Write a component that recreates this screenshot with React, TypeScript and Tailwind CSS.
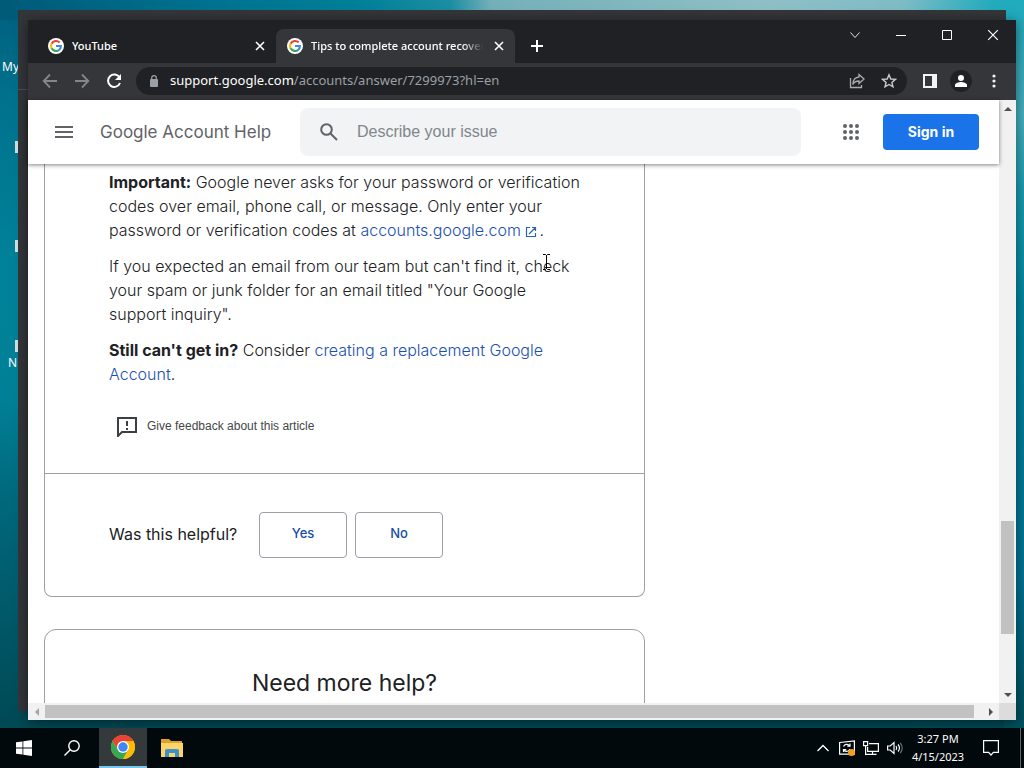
import React from "react";

function GoogleG() {
  return (
    <svg viewBox="0 0 16 16" className="size-4 shrink-0" aria-hidden="true">
      <circle cx="8" cy="8" r="8" fill="#fff" />
      <g fill="none" strokeWidth="2.1">
        <path d="M11.600 4.500A5 5 0 0 0 3.600 5.700" stroke="#ea4335" />
        <path d="M3.600 5.600a5 5 0 0 0 0 4.800" stroke="#fbbc05" />
        <path d="M3.600 10.300a5 5 0 0 0 7.700 1.400" stroke="#34a853" />
        <path d="M11.200 11.800A5 5 0 0 0 12.900 8H8" stroke="#4285f4" />
      </g>
    </svg>
  );
}

function Cross({ className }: { className: string }) {
  return (
    <svg viewBox="0 0 10 10" className={className} fill="none" stroke="currentColor" aria-hidden="true">
      <path d="M1 1l8 8M9 1L1 9" />
    </svg>
  );
}

function TabStrip() {
  return (
    <div className="flex h-[43px] shrink-0 items-stretch bg-[#202124] pl-2 text-white">
      <div role="tablist" aria-label="Open tabs" className="flex pt-[9px]">
        <div className="flex w-[240px] items-center gap-2 pr-2 pl-3">
          <GoogleG />
          <button role="tab" aria-selected="false" className="min-w-0 flex-1 overflow-hidden text-left text-[11px] font-medium whitespace-nowrap">
            YouTube
          </button>
          <button aria-label="Close YouTube" className="flex size-4 items-center justify-center">
            <Cross className="size-[10px] stroke-[1.6]" />
          </button>
        </div>
        <div className="flex w-[239px] items-center gap-2 rounded-t-lg bg-[#35363a] pr-2 pl-[11px]">
          <GoogleG />
          <button
            role="tab"
            aria-selected="true"
            className="min-w-0 flex-1 overflow-hidden [mask-image:linear-gradient(to_right,#000_88%,transparent)] text-left text-[11px] font-medium whitespace-nowrap"
          >
            Tips to complete account recovery
          </button>
          <button aria-label="Close tab" className="flex size-4 items-center justify-center">
            <Cross className="size-[10px] stroke-[1.6]" />
          </button>
        </div>
        <button aria-label="New tab" className="ml-4 flex w-3 items-center">
          <svg viewBox="0 0 12 12" className="size-3" stroke="#fff" strokeWidth="2" aria-hidden="true">
            <path d="M6 0v12M0 6h12" />
          </svg>
        </button>
      </div>
      <div className="ml-auto flex h-[30px] items-center">
        <button aria-label="Search tabs" className="flex w-[46px] justify-center">
          <svg viewBox="0 0 12 12" className="size-3" fill="none" stroke="#dfe1e5" aria-hidden="true">
            <path d="M1.500 3.500l4.500 5 4.500-5" />
          </svg>
        </button>
        <button aria-label="Minimize" className="flex w-[46px] justify-center">
          <svg viewBox="0 0 10 10" className="size-[10px]" stroke="#fff" aria-hidden="true">
            <path d="M0 5.500h10" />
          </svg>
        </button>
        <button aria-label="Maximize" className="flex w-[46px] justify-center">
          <svg viewBox="0 0 10 10" className="size-[10px]" fill="none" stroke="#fff" aria-hidden="true">
            <path d="M.5.5h9v9h-9z" />
          </svg>
        </button>
        <button aria-label="Close window" className="flex w-[46px] justify-center">
          <Cross className="size-3" />
        </button>
      </div>
    </div>
  );
}

function Toolbar() {
  return (
    <div className="flex h-[37px] shrink-0 items-center bg-[#35363a] pr-[13px] pb-0.5 pl-[14px]">
      <div className="flex gap-4">
        <button aria-label="Back" className="size-4">
          <svg viewBox="0 0 16 16" fill="none" stroke="#85868a" strokeWidth="1.8" aria-hidden="true">
            <path d="M15 8H2M8 1.500L1.700 8 8 14.500" />
          </svg>
        </button>
        <button aria-label="Forward" className="size-4">
          <svg viewBox="0 0 16 16" fill="none" stroke="#85868a" strokeWidth="1.8" aria-hidden="true">
            <path d="M1 8h13M8 1.500L14.300 8 8 14.500" />
          </svg>
        </button>
        <button aria-label="Reload" className="size-4">
          <svg viewBox="0 0 16 16" fill="none" stroke="#fff" strokeWidth="2" aria-hidden="true">
            <path d="M13.600 4.600A6.200 6.200 0 1 0 14 10" />
            <path d="M15 1v6H9z" fill="#fff" stroke="none" />
          </svg>
        </button>
      </div>
      <div className="ml-[14px] flex h-7 min-w-0 flex-1 items-center rounded-full bg-[#202124] pr-2.5 pl-[13px]">
        <svg viewBox="0 0 10 12" className="h-3 w-[10px] shrink-0" aria-hidden="true">
          <rect x="1" y="4" width="8" height="8" rx="1" fill="#9aa0a6" />
          <path d="M2.700 5V3a2.300 2.300 0 0 1 4.600 0v2" fill="none" stroke="#9aa0a6" strokeWidth="1.200" />
        </svg>
        <p className="ml-[11px] flex-1 text-[13px] whitespace-nowrap text-[#9aa0a6]">
          <span className="text-white">support.google.com</span>/accounts/answer/7299973?hl=en
        </p>
        <div className="flex gap-4">
          <button aria-label="Share" className="size-4">
            <svg viewBox="0 0 16 16" fill="none" stroke="#a9acb1" strokeWidth="1.300" aria-hidden="true">
              <path d="M1.500 5v9.500h11V12" />
              <path d="M10 1.500L15 6l-5 4.500V8C7 8 5 9 3.800 11.500 4 7 6.500 4.200 10 4z" />
            </svg>
          </button>
          <button aria-label="Bookmark this page" className="size-4">
            <svg viewBox="0 0 16 16" fill="none" stroke="#c8cacd" strokeWidth="1.400" aria-hidden="true">
              <path d="M8 1.800l1.800 4.200 4.600.4-3.500 3 1.100 4.500L8 11.500l-4 2.400 1.100-4.500-3.500-3 4.600-.4z" />
            </svg>
          </button>
        </div>
      </div>
      <div className="ml-4 flex items-center gap-[13px]">
        <button aria-label="Side panel" className="size-[14px]">
          <svg viewBox="0 0 14 14" aria-hidden="true">
            <path d="M1 1h12v12H1z" fill="none" stroke="#f1f3f4" strokeWidth="2" />
            <path d="M9 1h4v12H9z" fill="#f1f3f4" />
          </svg>
        </button>
        <button aria-label="Profile" className="flex size-[22px] items-center justify-center rounded-full bg-[#202124]">
          <svg viewBox="0 0 12 12" className="size-3" fill="#fff" aria-hidden="true">
            <circle cx="6" cy="3" r="3" />
            <path d="M0 12v-2c0-2 4-3 6-3s6 1 6 3v2z" />
          </svg>
        </button>
        <button aria-label="Menu" className="flex w-[18px] justify-center">
          <svg viewBox="0 0 4 14" className="h-[14px] w-1" fill="#f1f3f4" aria-hidden="true">
            <circle cx="2" cy="2" r="1.600" />
            <circle cx="2" cy="7" r="1.600" />
            <circle cx="2" cy="12" r="1.600" />
          </svg>
        </button>
      </div>
    </div>
  );
}

function SiteHeader() {
  return (
    <header className="z-10 flex h-16 shrink-0 items-center bg-white pr-5 pl-[26px] shadow-[0_1px_4px_rgba(0,0,0,0.5)]">
      <button aria-label="Main menu" className="flex w-5 justify-center">
        <svg viewBox="0 0 18 12" className="h-3 w-[18px]" fill="#5f6368" aria-hidden="true">
          <path d="M0 0h18v2H0zM0 5h18v2H0zM0 10h18v2H0z" />
        </svg>
      </button>
      <a href="#home" className="ml-[26px] w-[200px] pt-0.5 text-[17px] whitespace-nowrap text-[#5f6368]">
        Google Account Help
      </a>
      <div className="flex h-12 min-w-0 flex-1 items-center rounded-lg bg-[#f1f3f4] px-5">
        <svg viewBox="0 0 18 18" className="size-[18px] shrink-0" fill="none" stroke="#5f6368" strokeWidth="2" aria-hidden="true">
          <circle cx="6.500" cy="6.500" r="5.300" />
          <path d="M10.500 10.500L17 17" />
        </svg>
        <input
          aria-label="Describe your issue"
          placeholder="Describe your issue"
          className="ml-[19px] min-w-0 flex-1 bg-transparent font-['Liberation_Sans',sans-serif] text-[16px] placeholder-[#80868b] outline-none"
        />
      </div>
      <button aria-label="Google apps" className="mr-6 ml-[42px] size-4">
        <svg viewBox="0 0 16 16" fill="#5f6368" aria-hidden="true">
          {[2, 8, 14].map((y) => [2, 8, 14].map((x) => <circle key={`${x}-${y}`} cx={x} cy={y} r="2" />))}
        </svg>
      </button>
      <a href="#signin" className="flex h-9 w-24 items-center justify-center rounded bg-[#1a73e8] pb-0.5 text-[14px] font-bold text-white">
        Sign in
      </a>
    </header>
  );
}

function Article() {
  return (
    <main className="min-h-0 flex-1 overflow-hidden px-4">
      <article className="w-full max-w-[601px] rounded-b-lg border border-t-0 border-[#9aa0a6]">
        <div className="h-[309px] pt-[6px] pr-[60px] pl-16 text-[16px] leading-6 font-light text-[#202124]">
          <p>
            <strong className="font-bold">Important:</strong> Google never asks for your password or verification codes over email, phone call, or
            message. Only enter your password or verification codes at{" "}
            <a href="#accounts" className="text-[#1a50b0]">
              accounts.google.com{" "}
              <svg viewBox="0 0 12 12" className="mr-0.5 inline size-3" fill="none" stroke="#2a62c4" strokeWidth="1.200" aria-hidden="true">
                <path d="M5 1.500H1.500v9h9V7M7 1.500h3.500V5M10.500 1.500L4 8" />
              </svg>
            </a>
            .
          </p>
          <p className="mt-3">
            If you expected an email from our team but can't find it, check your spam or junk folder for an email titled "Your Google support
            inquiry".
          </p>
          <p className="mt-3">
            <strong className="font-bold">Still can't get in?</strong> Consider{" "}
            <a href="#replacement" className="text-[#1a50b0]">
              creating a replacement Google Account
            </a>
            .
          </p>
          <button className="mt-7 ml-2 flex items-center gap-[10px] font-['Liberation_Sans',sans-serif] text-[12px] font-normal text-[#444746]">
            <svg viewBox="0 0 20 20" className="mt-0.5 size-5" aria-hidden="true">
              <path d="M1 19V1h18v14H5z" fill="none" stroke="#3c4043" strokeWidth="2" />
              <path d="M9 4h2v5H9zM9 11h2v2H9z" fill="#3c4043" />
            </svg>
            Give feedback about this article
          </button>
        </div>
        <div className="flex h-[123px] items-center border-t border-[#9aa0a6] px-16 text-[#202124]">
          <p className="w-[150px] pb-0.5 text-[16px]">Was this helpful?</p>
          <div className="flex gap-2">
            <button className="h-[46px] w-[88px] rounded border border-[#9aa0a6] pb-0.5 text-[13px] font-medium text-[#174ea6]">Yes</button>
            <button className="h-[46px] w-[88px] rounded border border-[#9aa0a6] pb-0.5 text-[13px] font-medium text-[#174ea6]">No</button>
          </div>
        </div>
      </article>
      <section className="mt-8 h-40 w-full max-w-[601px] rounded-t-xl border border-[#9aa0a6] pt-9 text-center">
        <h2 className="text-[23px] text-[#202124]">Need more help?</h2>
      </section>
    </main>
  );
}

function Arrow({ d, fill = "#505050" }: { d: string; fill?: string }) {
  return (
    <svg viewBox="0 0 8 8" className="size-2" fill={fill} aria-hidden="true">
      <path d={d} />
    </svg>
  );
}

function Browser() {
  return (
    <div className="absolute top-5 right-2 bottom-12 left-7 flex flex-col shadow-[0_2px_12px_rgba(0,0,0,0.5)]">
      <TabStrip />
      <Toolbar />
      <div className="flex min-h-0 flex-1 bg-white">
        <div className="flex min-w-0 flex-1 flex-col font-[Inter,sans-serif]">
          <SiteHeader />
          <Article />
          <div className="flex h-[17px] shrink-0 items-center bg-[#f1f1f1]">
            <div className="flex w-[17px] justify-center">
              <Arrow d="M6 0v8L2 4z" fill="#a3a3a3" />
            </div>
            <div className="mr-[8px] h-[13px] flex-1 bg-[#c1c1c1]" />
            <div className="flex w-[17px] justify-center">
              <Arrow d="M2 0v8l4-4z" />
            </div>
          </div>
        </div>
        <div className="flex w-[17px] shrink-0 flex-col items-center bg-[#f1f1f1]">
          <div className="flex h-[17px] items-center">
            <Arrow d="M0 6h8L4 2z" />
          </div>
          <div className="flex min-h-0 w-[13px] flex-1 flex-col">
            <div className="flex-[404]" />
            <div className="flex-[113] bg-[#c1c1c1]" />
            <div className="flex-[52]" />
          </div>
          <div className="flex h-[17px] items-center">
            <Arrow d="M0 2h8L4 6z" />
          </div>
          <div className="h-[17px] w-full bg-[#dcdcdc]" />
        </div>
      </div>
    </div>
  );
}

function ChromeLogo() {
  return (
    <svg viewBox="0 0 24 24" className="size-6" aria-hidden="true">
      <circle cx="12" cy="12" r="12" fill="#fbbc05" />
      <path d="M1.600 6A12 12 0 0 1 22.400 6H12L6.800 15z" fill="#ea4335" />
      <path d="M1.600 6A12 12 0 0 0 12 24l5.200-9H6.800z" fill="#34a853" />
      <path d="M22.400 6H12l5.200 9L12 24A12 12 0 0 0 22.400 6z" fill="#fbbc05" />
      <circle cx="12" cy="12" r="6" fill="#fff" />
      <circle cx="12" cy="12" r="4.700" fill="#4285f4" />
    </svg>
  );
}

function Taskbar() {
  return (
    <footer className="absolute inset-x-0 bottom-0 flex h-10 items-stretch bg-[#02090c] text-white">
      <button aria-label="Start" className="flex w-12 items-center justify-center">
        <svg viewBox="0 0 16 16" className="size-4" fill="#fff" aria-hidden="true">
          <path d="M0 2.300L6.500 1.400v6.200H0zM7.300 1.300L16 0v7.600H7.300zM0 8.400h6.500v6.200L0 13.700zM7.300 8.400H16V16l-8.700-1.300z" />
        </svg>
      </button>
      <button aria-label="Search" className="flex w-[51px] items-center justify-center">
        <svg viewBox="0 0 16 16" className="mr-1 size-4" fill="none" stroke="#fff" strokeWidth="1.400" aria-hidden="true">
          <circle cx="10" cy="6" r="5.200" />
          <path d="M6.300 9.700L.5 15.500" />
        </svg>
      </button>
      <button aria-label="Google Chrome" className="flex w-12 items-center justify-center border-b-2 border-[#76c6ed] bg-[#34393c]">
        <ChromeLogo />
      </button>
      <button aria-label="File Explorer" className="flex w-[50px] items-center justify-center">
        <svg viewBox="0 0 22 18" className="h-[18px] w-[22px]" aria-hidden="true">
          <path d="M0 0h8l2 2h11v5H0z" fill="#dfa02c" />
          <path d="M0 4h22v14H0z" fill="#fbd567" />
          <path d="M4 18v-6q0-2 2-2h10q2 0 2 2v6h-4v-4H8v4z" fill="#3f8fc9" />
        </svg>
      </button>
      <div className="ml-auto flex items-center">
        <button aria-label="Show hidden icons" className="flex w-6 justify-center">
          <svg viewBox="0 0 12 8" className="h-2 w-3" fill="none" stroke="#fff" strokeWidth="1.300" aria-hidden="true">
            <path d="M.5 7L6 1.500 11.500 7" />
          </svg>
        </button>
        <button aria-label="Updates" className="flex w-6 justify-center">
          <svg viewBox="0 0 16 16" className="size-4" fill="none" stroke="#fff" strokeWidth="1.200" aria-hidden="true">
            <path d="M.6 2.500L15.400.8v13.400L.6 14.200z" />
            <path d="M4.500 6.500a3.500 3.500 0 0 1 6-.8M11 3.500v2.700H8.300M11 9a3.500 3.500 0 0 1-6 1M4.500 12V9.500h2.700" />
            <circle cx="12.500" cy="12.500" r="3.500" fill="#f59e1b" stroke="none" />
          </svg>
        </button>
        <button aria-label="Network" className="flex w-6 justify-center">
          <svg viewBox="0 0 16 14" className="h-[14px] w-4" fill="none" stroke="#fff" strokeWidth="1.200" aria-hidden="true">
            <path d="M6 2.600h9.400v7.800H4.600V6M9.500 10.400v3M5.500 13.400h8M.6.600h4v4h-4zM2.600 4.600v8.800h3" />
          </svg>
        </button>
        <button aria-label="Volume" className="flex w-6 justify-center">
          <svg viewBox="0 0 16 14" className="h-[14px] w-4" fill="none" stroke="#fff" strokeWidth="1.200" aria-hidden="true">
            <path d="M.6 5h2.600L7 1.500v11L3.200 9H.6zM9 5q1.500 2 0 4M11 3.500q3 3.500 0 7" />
            <path d="M13.200 1.800q4 5.200 0 10.400" stroke="#66707a" />
          </svg>
        </button>
        <div className="flex w-[62px] flex-col items-center text-[11px] leading-[18px] whitespace-nowrap">
          <span>3:27 PM</span>
          <span>4/15/2023</span>
        </div>
        <button aria-label="Notifications" className="mr-[7px] flex w-11 justify-center">
          <svg viewBox="0 0 16 16" className="size-4" fill="none" stroke="#fff" strokeWidth="1.200" aria-hidden="true">
            <path d="M.6.600h14.800v11.800h-5L8 15l-2.400-2.600h-5z" />
          </svg>
        </button>
        <span className="h-10 w-1 border-l border-[#5b6365]" />
      </div>
    </footer>
  );
}

export default function App() {
  return (
    <div className="relative h-screen w-full overflow-hidden bg-[linear-gradient(to_bottom,#005f7e_0%,#00738e_14%,#00829a_35%,#008096_52%,#00687c_65%,#004a56_94%)] font-['Noto_Sans','Open_Sans',sans-serif] text-white">
      <div className="absolute inset-y-0 right-0 w-5 bg-[linear-gradient(to_bottom,#1ea6b8_0%,#46b0be_15%,#1a9cb0_25%,#0086a0_40%,#007494_75%,#00505e_94%)]" />
      <div className="absolute inset-x-0 top-0 h-5 bg-[linear-gradient(to_right,#005a78_0%,#006c8a_15%,#008099_35%,#1c8ea2_44%,#74b0b8_48%,#8fbfc6_75%,#7fbcc6_88%,#22abbd_97%)]" />
      <span className="absolute top-[58px] left-[2px] text-[12px]">My</span>
      <span className="absolute top-[354px] left-2 text-[12px]">N</span>
      <span className="absolute top-[141px] left-[15px] h-3 w-1 bg-[#cfdfe5]" />
      <span className="absolute top-[240px] left-[15px] h-3 w-1 bg-[#cfdfe5]" />
      <span className="absolute top-[340px] left-[15px] h-3 w-1 bg-[#cfdfe5]" />
      <div className="absolute top-[10px] right-[18px] bottom-[57px] left-[18px] flex flex-col bg-[#35363a]">
        <div className="mt-[79px] h-px bg-[#505155]" />
      </div>
      <Browser />
      <Taskbar />
      <svg viewBox="0 0 7 16" className="absolute top-[254px] left-[543px] h-4 w-[7px]" fill="none" stroke="#000" aria-hidden="true">
        <path d="M0 .5h2.500l1 1 1-1H7M3.500 1v14M0 15.500h2.500l1-1 1 1H7" />
      </svg>
    </div>
  );
}
